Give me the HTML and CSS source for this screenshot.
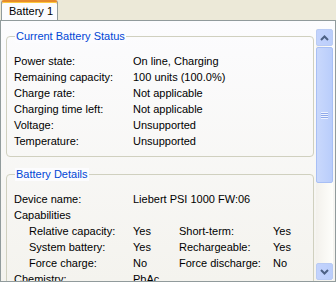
FILE: index.html
```html
<!DOCTYPE html>
<html lang="en">
<head>
  <meta charset="UTF-8">
  <title>Battery 1</title>
  <link rel="stylesheet" href="styles.css">
</head>
<body>
  <div class="tabs">
    <div class="tab">Battery 1</div>
  </div>

  <div class="panel">
    <div class="content">
      <div class="group">
        <div class="group-title">Current Battery Status</div>
        <div class="rows">
          <div class="row"><span>Power state:</span><span>On line, Charging</span></div>
          <div class="row"><span>Remaining capacity:</span><span>100 units (100.0%)</span></div>
          <div class="row"><span>Charge rate:</span><span>Not applicable</span></div>
          <div class="row"><span>Charging time left:</span><span>Not applicable</span></div>
          <div class="row"><span>Voltage:</span><span>Unsupported</span></div>
          <div class="row"><span>Temperature:</span><span>Unsupported</span></div>
        </div>
      </div>

      <div class="group details">
        <div class="group-title">Battery Details</div>
        <div class="rows">
          <div class="row"><span>Device name:</span><span>Liebert PSI 1000 FW:06</span></div>
          <div class="row"><span>Capabilities</span></div>
          <div class="caps">
            <span>Relative capacity:</span><span>Yes</span><span>Short-term:</span><span>Yes</span>
            <span>System battery:</span><span>Yes</span><span>Rechargeable:</span><span>Yes</span>
            <span>Force charge:</span><span>No</span><span>Force discharge:</span><span>No</span>
          </div>
          <div class="row"><span>Chemistry:</span><span>PbAc</span></div>
        </div>
      </div>
    </div>

    <div class="scrollbar">
      <div class="sb-btn">
        <svg width="9" height="6" viewBox="0 0 9 6"><path d="M1 5 L4.5 1.5 L8 5" fill="none" stroke="#4d6185" stroke-width="2"/></svg>
      </div>
      <div class="track">
        <div class="thumb">
          <div class="grip"></div>
        </div>
      </div>
      <div class="sb-btn">
        <svg width="9" height="6" viewBox="0 0 9 6"><path d="M1 1 L4.5 4.5 L8 1" fill="none" stroke="#4d6185" stroke-width="2"/></svg>
      </div>
    </div>
  </div>
</body>
</html>
```

FILE: styles.css
```css
body {
  margin: 0;
  background: #ece9d8;
  font-family: "Liberation Sans", Arial, sans-serif;
  font-size: 11px;
  color: #000;
  width: 336px;
  height: 282px;
  overflow: hidden;
}
.tabs {
  height: 20px;
  display: flex;
  padding-left: 1px;
}
.tab {
  position: relative;
  z-index: 1;
  width: 48px;
  height: 18px;
  padding-left: 7px;
  line-height: 18px;
  font-size: 11px;
  background: #fcfcfe;
  border-left: 1px solid #919b9c;
  border-right: 1px solid #919b9c;
  border-top: 2px solid #e68b2c;
  box-shadow: inset 0 1px 0 #ffc83c;
  border-radius: 3px 3px 0 0;
}
.panel {
  height: 260px;
  border: 1px solid #919b9c;
  background: linear-gradient(#fcfcfe, #f4f3ee);
  display: flex;
}
.content {
  flex: 1;
  padding: 0 2px 0 5px;
  overflow: hidden;
}
.group {
  margin-top: 15px;
  border: 1px solid #d0d0bf;
  border-radius: 4px;
  padding: 0 0 7px 7px;
}
.details {
  margin-top: 17px;
}
.group-title {
  width: max-content;
  margin: -7px 0 0 1px;
  padding: 0 1px;
  line-height: 13px;
  color: #0046d5;
  background: #fcfcfe;
}
.rows {
  padding-top: 10px;
}
.row {
  display: grid;
  grid-template-columns: 119px 1fr;
  line-height: 16px;
  white-space: nowrap;
}
.caps {
  display: grid;
  grid-template-columns: 104px 46px 94px 1fr;
  padding-left: 15px;
  line-height: 16px;
  white-space: nowrap;
}
.scrollbar {
  width: 17px;
  margin: 8px 2px 1px 0;
  display: flex;
  flex-direction: column;
  background: linear-gradient(to right, #f3f1ec, #fefefb);
}
.sb-btn {
  height: 15px;
  border: 1px solid #b9cbf4;
  border-radius: 2px;
  background: linear-gradient(to right, #c3d3fd, #bbcefb);
  display: flex;
  align-items: center;
  justify-content: center;
}
.track {
  flex: 1;
  padding: 1px 0;
}
.thumb {
  height: 134px;
  border: 1px solid #a8bff5;
  border-radius: 2px;
  background: linear-gradient(to right, #c9d8fc, #b9cdfb);
  display: flex;
  align-items: center;
  justify-content: center;
}
.grip {
  width: 7px;
  height: 7px;
  background: repeating-linear-gradient(#eef3fe 0 1px, #8fa9ea 1px 2px);
}
```
